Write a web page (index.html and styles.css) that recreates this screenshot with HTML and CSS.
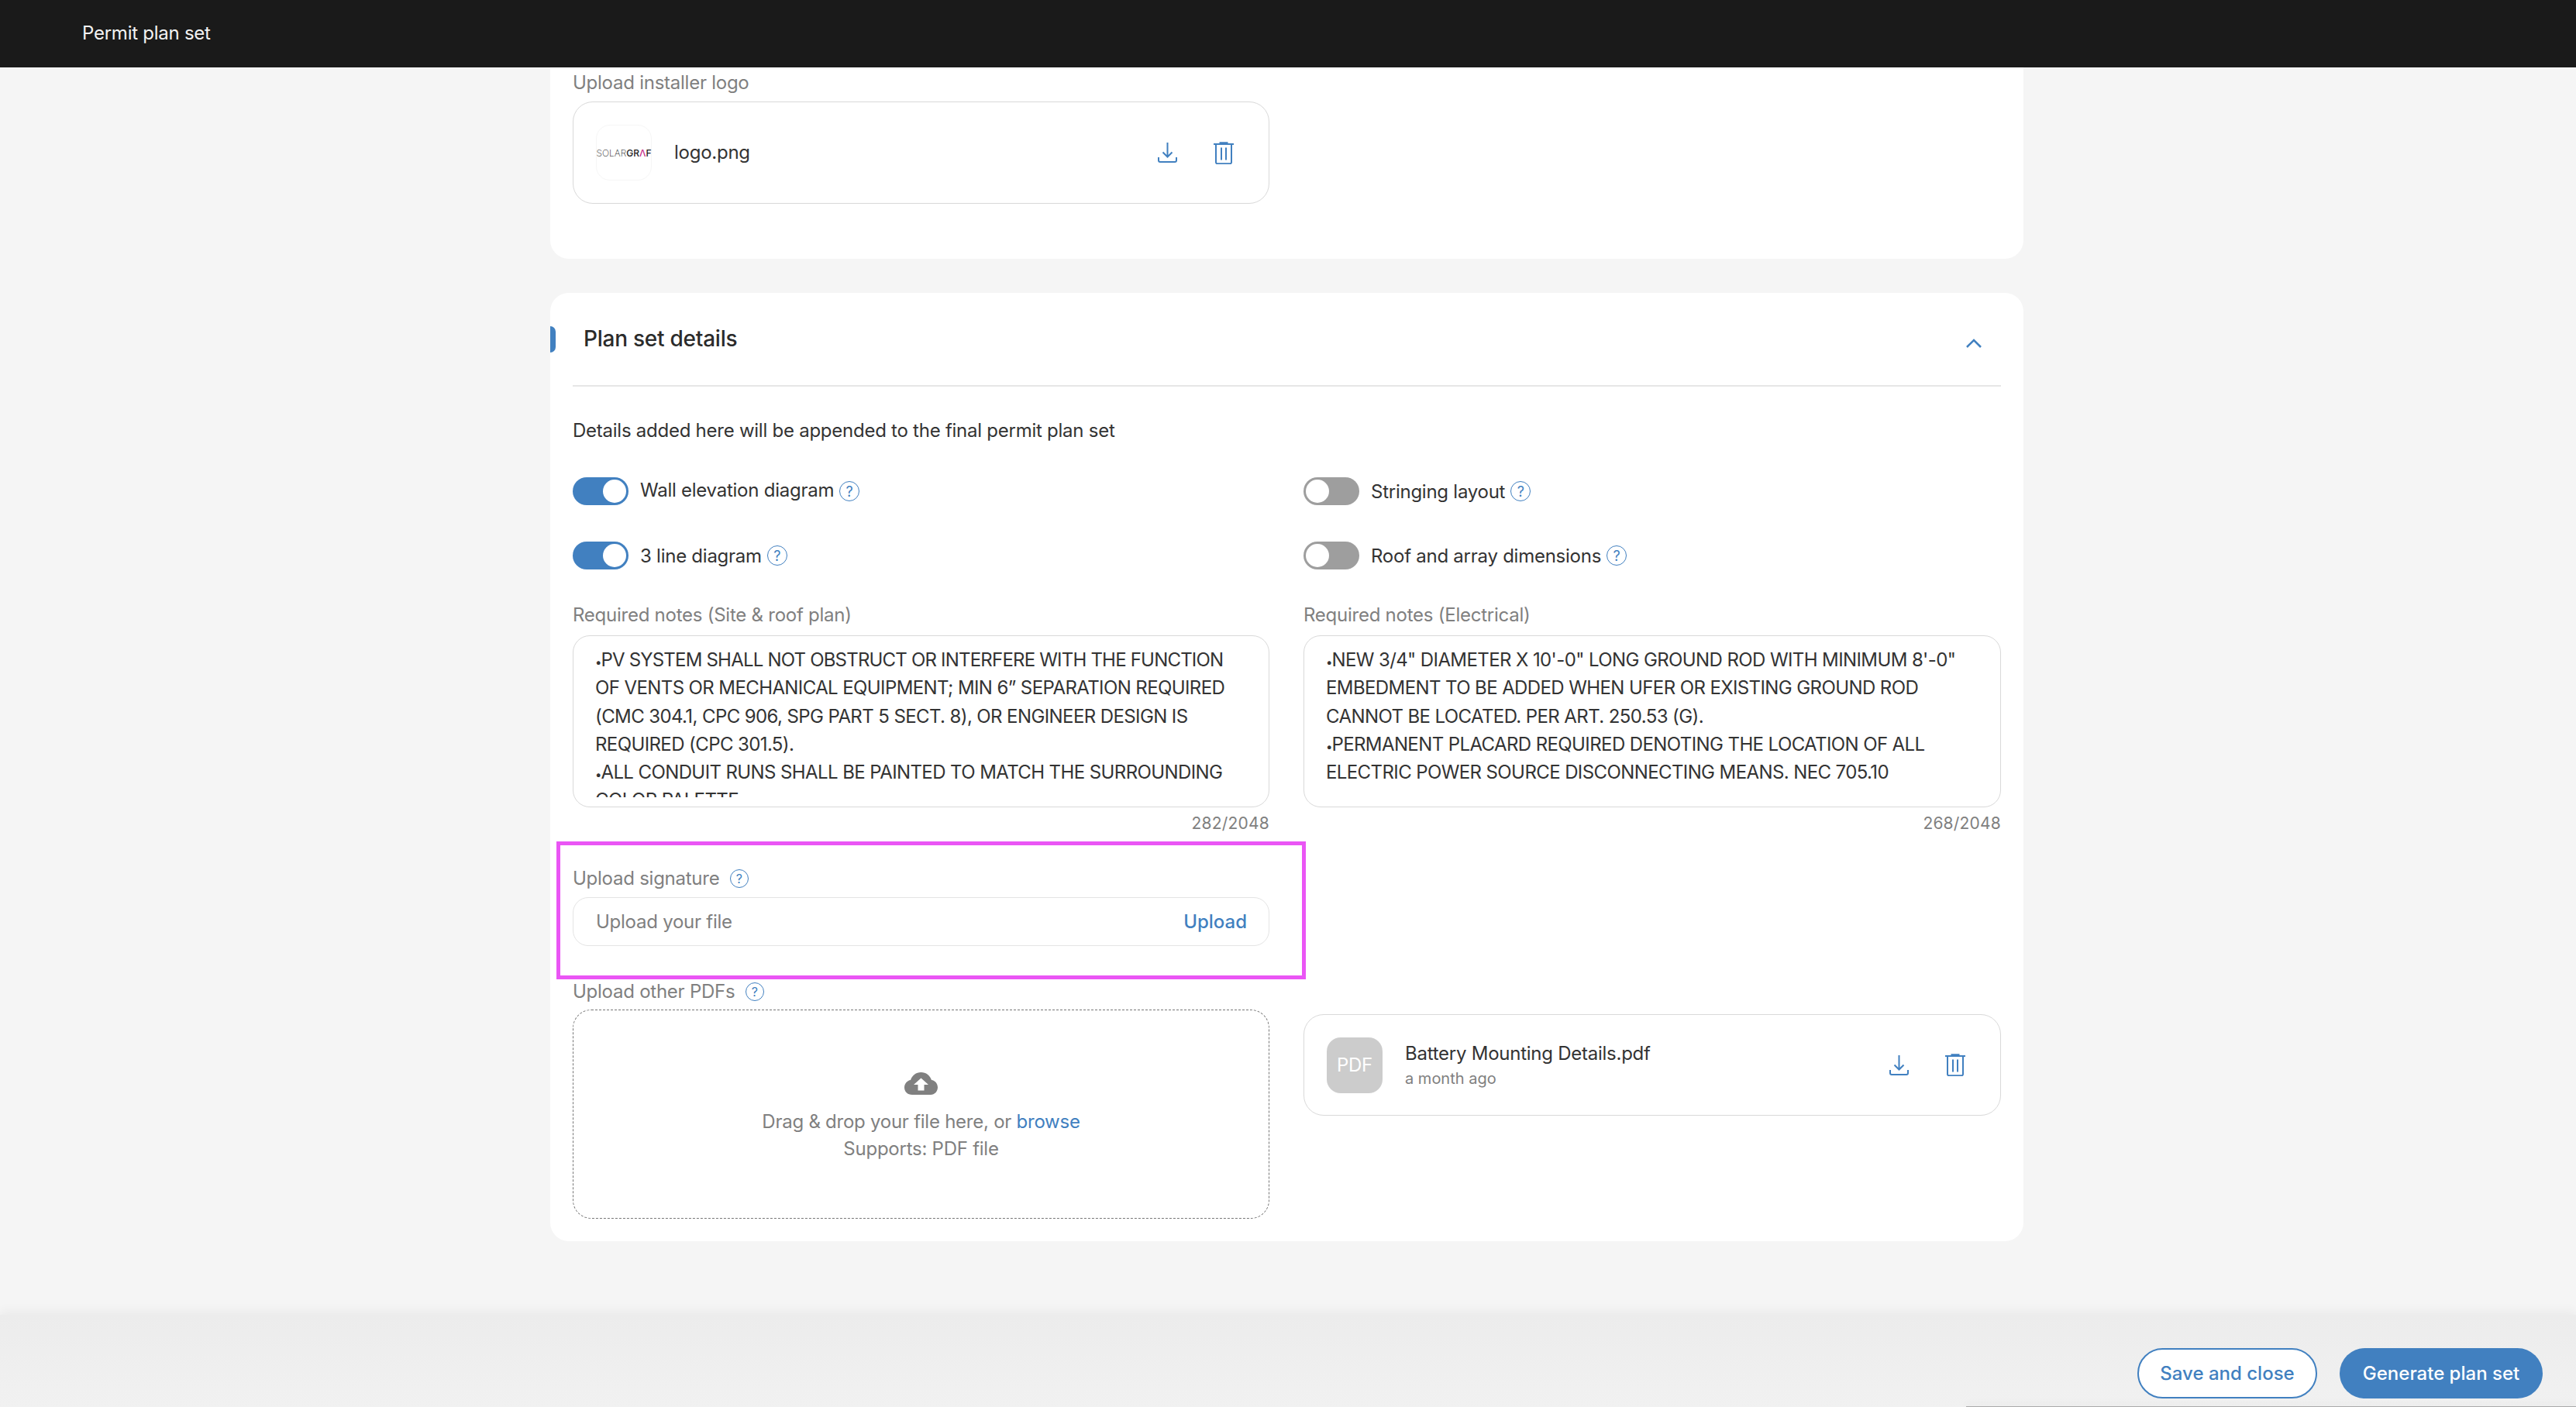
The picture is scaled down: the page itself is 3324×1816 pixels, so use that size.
FILE: index.html
```html
<!DOCTYPE html>
<html lang="en">
<head>
<meta charset="utf-8">
<title>Permit plan set</title>
<link rel="stylesheet" href="styles.css">
</head>
<body>
<header class="topbar">Permit plan set</header>
<main class="scroll">
  <section class="card card-top">
    <div class="label">Upload installer logo</div>
    <div class="half file-row file-row-logo">
      <div class="thumb thumb-logo"><span class="logo-text"><span class="logo-thin">SOLAR</span>GR<span class="logo-a">Λ</span>F</span></div>
      <div class="file-name">logo.png</div>
      <div class="file-actions">
        <svg class="ico-dl" viewBox="0 0 25 26"><path d="M12.5 0v18M6.5 12.5l6 6 6-6M1 19v4a2 2 0 0 0 2 2h19a2 2 0 0 0 2-2v-4"/></svg>
        <svg class="ico-tr" viewBox="0 0 26 29"><path d="M7.5 1.2h11M0 3h26M3 3v23.5a1.8 1.8 0 0 0 1.8 1.8h16.4a1.8 1.8 0 0 0 1.8-1.8V3M10 7.5v16M16 7.5v16"/></svg>
      </div>
    </div>
  </section>

  <section class="card card-details">
    <div class="card-head">
      <span class="marker"></span>
      <h2 class="card-title">Plan set details</h2>
      <svg class="chevron" viewBox="0 0 20 12"><path d="M1 11l9-9 9 9"/></svg>
    </div>
    <p class="intro">Details added here will be appended to the final permit plan set</p>

    <div class="toggles">
      <div class="toggle-row"><span class="toggle on"></span><span class="toggle-label label-up">Wall elevation diagram</span><span class="help">?</span></div>
      <div class="toggle-row"><span class="toggle"></span><span class="toggle-label">Stringing layout</span><span class="help">?</span></div>
      <div class="toggle-row"><span class="toggle on"></span><span class="toggle-label">3 line diagram</span><span class="help">?</span></div>
      <div class="toggle-row"><span class="toggle"></span><span class="toggle-label">Roof and array dimensions</span><span class="help">?</span></div>
    </div>

    <div class="columns notes">
      <div>
        <div class="label">Required notes (Site &amp; roof plan)</div>
        <div class="notes-box"><div class="notes-text"><span class="bullet">•</span><span class="tight">PV SYSTEM SHALL NOT OBSTRUCT OR INTERFERE WITH THE FUNCTION</span><br>OF VENTS OR MECHANICAL EQUIPMENT; MIN 6” SEPARATION REQUIRED<br>(CMC 304.1, CPC 906, SPG PART 5 SECT. 8), OR ENGINEER DESIGN IS<br>REQUIRED (CPC 301.5).<br><span class="bullet">•</span>ALL CONDUIT RUNS SHALL BE PAINTED TO MATCH THE SURROUNDING<br>COLOR PALETTE</div></div>
        <div class="count">282/2048</div>
      </div>
      <div>
        <div class="label">Required notes (Electrical)</div>
        <div class="notes-box"><div class="notes-text"><span class="bullet">•</span>NEW 3/4" DIAMETER X 10'-0" LONG GROUND ROD WITH MINIMUM 8'-0"<br>EMBEDMENT TO BE ADDED WHEN UFER OR EXISTING GROUND ROD<br>CANNOT BE LOCATED. PER ART. 250.53 (G).<br><span class="bullet">•</span>PERMANENT PLACARD REQUIRED DENOTING THE LOCATION OF ALL<br>ELECTRIC POWER SOURCE DISCONNECTING MEANS. NEC 705.10</div></div>
        <div class="count">268/2048</div>
      </div>
    </div>

    <div class="signature half">
      <div class="label label-help">Upload signature <span class="help help-sm">?</span></div>
      <div class="upload-input"><span>Upload your file</span><span class="upload-link">Upload</span></div>
      <div class="highlight"></div>
    </div>

    <div class="columns others">
      <div>
        <div class="label label-help">Upload other PDFs <span class="help help-sm">?</span></div>
        <div class="dropzone">
          <svg class="cloud" viewBox="0 0 43 29"><path class="cloud-body" d="M10 29C4 29 0 25 0 19.500c0-5 4-9 8-9.500C10 4 15 0 21.500 0S33 4 35 10c4.500.5 8 4.500 8 9.500s-4 9.500-9 9.500z"/><path class="cloud-arrow" d="M21.500 7.500l9.500 8.500h-5.500v7.500h-8V16H12z"/></svg>
          <div class="drop-text">Drag &amp; drop your file here, or <span class="browse">browse</span></div>
          <div class="drop-text">Supports: PDF file</div>
        </div>
      </div>
      <div class="file-col">
        <div class="file-row file-row-pdf">
          <div class="thumb thumb-pdf">PDF</div>
          <div class="file-meta">
            <div class="file-name">Battery Mounting Details.pdf</div>
            <div class="file-age">a month ago</div>
          </div>
          <div class="file-actions">
            <svg class="ico-dl" viewBox="0 0 25 26"><path d="M12.5 0v18M6.5 12.5l6 6 6-6M1 19v4a2 2 0 0 0 2 2h19a2 2 0 0 0 2-2v-4"/></svg>
            <svg class="ico-tr" viewBox="0 0 26 29"><path d="M7.5 1.2h11M0 3h26M3 3v23.5a1.8 1.8 0 0 0 1.8 1.8h16.4a1.8 1.8 0 0 0 1.8-1.8V3M10 7.5v16M16 7.5v16"/></svg>
          </div>
        </div>
      </div>
    </div>
  </section>
</main>
<footer class="footer">
  <button class="btn btn-outline">Save and close</button>
  <button class="btn btn-solid">Generate plan set</button>
  <div class="edge-shadow"></div>
</footer>
</body>
</html>
```

FILE: styles.css
```css
* { box-sizing: border-box; }
html, body { margin: 0; height: 100%; }
body {
  display: flex;
  flex-direction: column;
  height: 1816px;
  overflow: hidden;
  background: #f5f5f5;
  font-family: Inter, "Liberation Sans", sans-serif;
  font-size: 24px;
  color: #333;
  letter-spacing: -0.25px;
}
.topbar {
  height: 87px;
  flex: none;
  background: #1a1a1a;
  color: #f2f2f2;
  padding-left: 106px;
  line-height: 86px;
  position: relative;
  z-index: 2;
}
.scroll {
  flex: 1;
  min-height: 0;
  width: 1901px;
  margin-left: 710px;
  display: flex;
  flex-direction: column;
  gap: 44px;
}
.card {
  background: #fff;
  padding: 0 29px;
  border-radius: 24px;
}
.card-top {
  border-radius: 0 0 24px 24px;
  padding-top: 5px;
  padding-bottom: 71px;
}
.card-details { padding-bottom: 29px; }
.label {
  height: 30px;
  line-height: 30px;
  color: #808080;
}
.half { width: 899px; }
.file-row {
  display: flex;
  align-items: center;
  border: 1px solid #d9d9d9;
  border-radius: 26px;
  padding: 0 45px 0 29px;
}
.file-row-logo { height: 132px; margin-top: 9px; }
.file-row-logo .file-name { margin-bottom: 2px; }
.file-row-pdf { height: 131px; }
.thumb {
  width: 72px;
  height: 72px;
  flex: none;
  border-radius: 18px;
  display: flex;
  align-items: center;
  justify-content: center;
}
.thumb-logo { border: 1px solid #f6f6f6; }
.logo-text {
  font-size: 12px;
  letter-spacing: 0;
  color: #222;
  font-weight: 500;
  white-space: nowrap;
}
.logo-thin { font-weight: 200; }
.logo-a { color: #c8348e; }
.thumb-pdf {
  background: #ccc;
  color: #fff;
  font-size: 24px;
}
.file-name {
  margin-left: 29px;
  color: #333;
}
.file-meta { display: flex; flex-direction: column; gap: 6px; }
.file-age {
  margin-left: 29px;
  color: #808080;
  font-size: 20px;
  letter-spacing: 0;
}
.file-actions {
  margin-left: auto;
  display: flex;
  align-items: center;
  gap: 47px;
}
.ico-dl, .ico-tr {
  fill: none;
  stroke: #4180c0;
  stroke-width: 2;
  display: block;
}
.ico-dl { width: 25px; height: 26px; }
.ico-tr { width: 26px; height: 29px; }
.card-head {
  position: relative;
  height: 121px;
  border-bottom: 2px solid #e6e6e6;
  display: flex;
  align-items: center;
  justify-content: space-between;
  padding: 0 25px 2px 14px;
}
.marker {
  position: absolute;
  left: -29px;
  top: 43px;
  width: 7px;
  height: 34px;
  background: #4180c0;
  border-radius: 0 8px 8px 0;
}
.card-title {
  margin: 0;
  font-size: 28px;
  font-weight: 500;
  color: #2b2b2b;
}
.chevron {
  width: 20px;
  height: 12px;
  fill: none;
  stroke: #4180c0;
  stroke-width: 2.6;
  margin-top: 12px;
}
.intro {
  margin: 40px 0 0;
  height: 34px;
  line-height: 34px;
  color: #333;
}
.toggles {
  display: grid;
  grid-template-columns: 899px 900px;
  column-gap: 44px;
  row-gap: 47px;
  margin-top: 43px;
}
.toggle-row {
  display: flex;
  align-items: center;
  height: 36px;
}
.label-up { margin-bottom: 4px; }
.toggle {
  width: 72px;
  height: 36px;
  flex: none;
  border-radius: 18px;
  background: #9e9e9e;
  position: relative;
  margin-right: 15px;
}
.toggle::after {
  content: "";
  position: absolute;
  top: 3px;
  left: 3px;
  width: 30px;
  height: 30px;
  border-radius: 50%;
  background: #fff;
}
.toggle.on { background: #4180c0; }
.toggle.on::after { left: 39px; }
.help {
  width: 26px;
  height: 26px;
  flex: none;
  margin-left: 7px;
  border: 1.5px solid #4180c0;
  border-radius: 50%;
  color: #4180c0;
  display: inline-flex;
  align-items: center;
  justify-content: center;
  font-size: 18px;
  letter-spacing: 0;
  font-weight: 400;
}
.help-sm { width: 24px; height: 24px; font-size: 16px; margin-left: 7px; }
.label-help { display: flex; align-items: center; white-space: pre; }
.columns {
  display: grid;
  grid-template-columns: 899px 900px;
  column-gap: 44px;
}
.notes { margin-top: 44px; }
.notes-box {
  margin-top: 11px;
  height: 222px;
  border: 1px solid #d9d9d9;
  border-radius: 22px;
  padding: 13px 28px 0;
}
.notes-text {
  height: 195px;
  overflow: hidden;
  line-height: 36.3px;
  white-space: nowrap;
  color: #333;
  letter-spacing: -0.6px;
}
.bullet { font-size: 15px; letter-spacing: -1px; line-height: 0; }
.tight { letter-spacing: -0.8px; }
.count {
  margin-top: 8px;
  height: 26px;
  line-height: 26px;
  text-align: right;
  color: #808080;
  font-size: 21px;
  letter-spacing: 0.2px;
}
.signature {
  position: relative;
  margin-top: 43px;
}
.upload-input {
  margin-top: 9px;
  height: 63px;
  border: 1px solid #e4e4e4;
  border-radius: 20px;
  display: flex;
  align-items: center;
  justify-content: space-between;
  padding: 0 28px 0 29px;
  color: #808080;
}
.upload-link { color: #4180c0; font-weight: 500; letter-spacing: 0; }
.highlight {
  position: absolute;
  left: -21px;
  right: -47px;
  top: -33px;
  height: 178px;
  border: 5px solid #ea55f5;
  pointer-events: none;
}
.others { margin-top: 44px; }
.dropzone {
  margin-top: 8px;
  height: 270px;
  border: 1px dashed #777;
  border-radius: 24px;
  display: flex;
  flex-direction: column;
  align-items: center;
  padding-top: 80px;
  color: #808080;
}
.cloud { width: 43px; height: 29px; flex: none; margin-bottom: 17px; }
.cloud-body { fill: #808080; }
.cloud-arrow { fill: #fff; }
.drop-text { height: 35px; line-height: 35px; }
.browse { color: #4180c0; }
.file-col { padding-top: 44px; }
.footer {
  position: relative;
  height: 119px;
  flex: none;
  background: linear-gradient(#ececec, #f1f1f1);
  box-shadow: 0 -4px 14px rgba(0,0,0,.05);
  display: flex;
  justify-content: flex-end;
  align-items: flex-start;
  gap: 29px;
  padding: 43px 43px 0 0;
}
.btn {
  height: 65px;
  border-radius: 33px;
  font: 500 24px Inter, "Liberation Sans", sans-serif;
  letter-spacing: 0;
  padding: 0;
}
.btn-outline {
  width: 232px;
  background: #fff;
  color: #4180c0;
  border: 2px solid #4180c0;
}
.btn-solid {
  width: 262px;
  background: #4180c0;
  color: #fff;
  border: 0;
}
.edge-shadow {
  position: absolute;
  left: 2537px;
  right: 0;
  bottom: 0;
  height: 1px;
  background: #aaa;
  box-shadow: 0 -2px 10px rgba(0,0,0,.18);
}
```
